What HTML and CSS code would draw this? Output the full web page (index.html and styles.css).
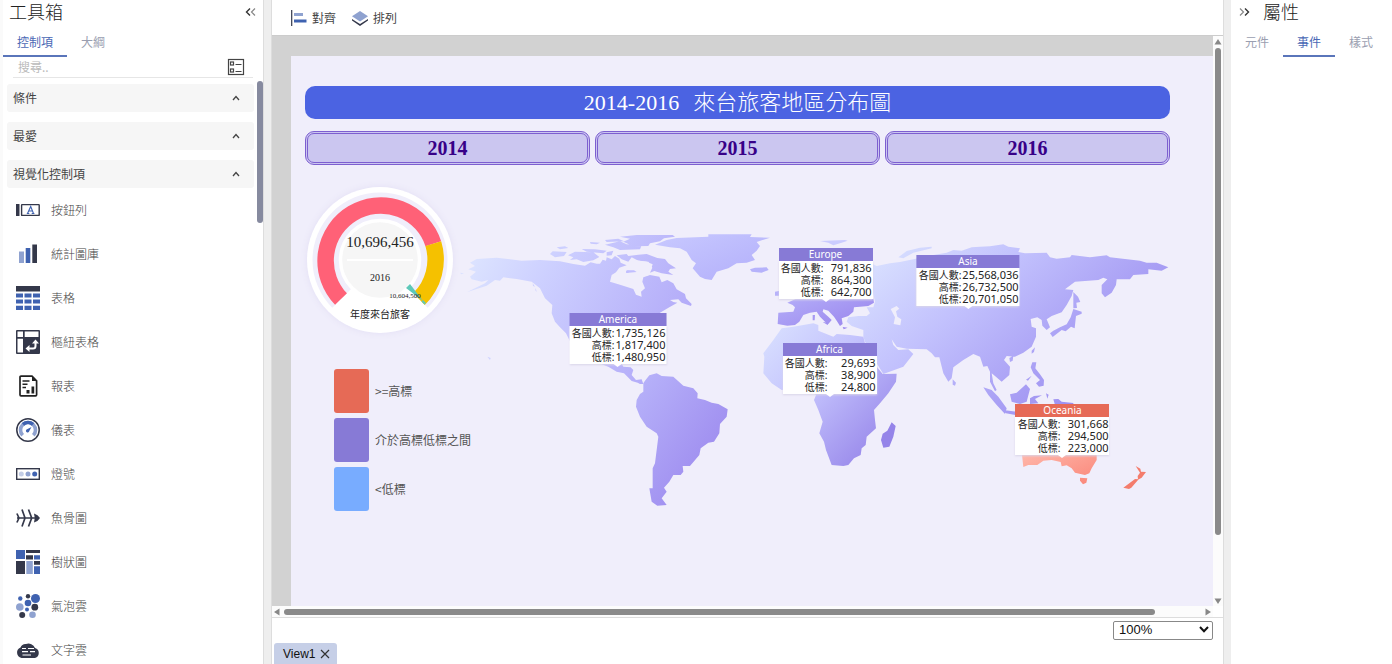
FILE: index.html
```html
<!DOCTYPE html>
<html lang="zh-Hant">
<head>
<meta charset="utf-8">
<title>2014-2016 來台旅客地區分布圖</title>
<link rel="stylesheet" href="styles.css">
</head>
<body>
<div class="app">
  <aside class="panel toolbox">
    <header class="panel-head">
      <h2>工具箱</h2>
      <button class="icon-btn" aria-label="收合"><svg width="12" height="10" viewBox="0 0 12 10"><path d="M5 1.500 1.500 5 5 8.500" fill="none" stroke="#333" stroke-width="1.400"/><path d="M10 1.500 6.500 5 10 8.500" fill="none" stroke="#888" stroke-width="1.200"/></svg></button>
    </header>
    <nav class="tabs"><button class="tab active">控制項</button><button class="tab">大綱</button></nav>
    <div class="search">
      <input type="text" aria-label="搜尋" placeholder="搜尋..">
      <button class="icon-btn" aria-label="檢視方式"><svg width="18" height="18" viewBox="0 0 18 18" fill="none" stroke="#444" stroke-width="1.200"><rect x="1.500" y="1.500" width="15" height="15"/><rect x="3.500" y="4" width="3" height="3"/><rect x="3.500" y="11" width="3" height="3"/><path d="M8.500 6.500h6M8.500 13.500h6"/></svg></button>
    </div>
    <div class="scroll-row">
      <div class="tool-list">
        <button class="section">條件<svg width="8" height="6" viewBox="0 0 8 6"><path d="M1 5 4 1.500 7 5"/></svg></button>
        <button class="section">最愛<svg width="8" height="6" viewBox="0 0 8 6"><path d="M1 5 4 1.500 7 5"/></svg></button>
        <button class="section">視覺化控制項<svg width="8" height="6" viewBox="0 0 8 6"><path d="M1 5 4 1.500 7 5"/></svg></button>
        <ul class="items">
          <li><svg viewBox="0 0 24 24"><path d="M0 6h3.500v12H0z" fill="#34384a"/><rect x="5.600" y="6.600" width="17.600" height="10.800" rx=".5" fill="#fff" stroke="#34384a" stroke-width="1.400"/><path d="M11.500 15.500 14.700 8.500 17.500 15.500M12.700 13h4M10.800 15.500h2.500M15.700 15.500h2.700" fill="none" stroke="#3f62b0" stroke-width="1.100"/></svg>按鈕列</li>
          <li><svg viewBox="0 0 24 24"><path d="M3 9.500h5V21H3z" fill="#8fa2d0"/><path d="M9.700 6h4.600v15H9.700z" fill="#3f62b0"/><path d="M16.300 2.500H21V21h-4.700z" fill="#34384a"/></svg>統計圖庫</li>
          <li><svg viewBox="0 0 24 24"><path d="M0 0h24v5.500H0z" fill="#34384a"/><path d="M0 7.500h7v4H0zM8.500 7.500h7v4h-7zM17 7.500h7v4h-7zM0 13.500h7v4H0zM8.500 13.500h7v4h-7zM17 13.500h7v4h-7zM0 19.800h7V24H0zM8.500 19.800h7V24h-7zM17 19.800h7V24h-7z" fill="#3f62b0"/></svg>表格</li>
          <li><svg viewBox="0 0 24 24"><rect width="24" height="24" rx="1" fill="#34384a"/><path d="M1.500 1.500H7V7H1.500zM8.700 1.500h13.800V7H8.700zM1.500 8.700H7v13.800H1.500z" fill="#fff"/><path d="M12 18.500h5q2.500 0 2.500-2.500v-4" fill="none" stroke="#fff" stroke-width="2"/><path d="m9.500 18.500 4-3.500v7zM19.500 9.500l-3.500 4h7z" fill="#fff"/></svg>樞紐表格</li>
          <li><svg viewBox="0 0 24 24"><path d="M5 2.200h11l4.600 4.600v14q0 1-1 1H5q-1 0-1-1V3.200q0-1 1-1z" fill="#fff" stroke="#222" stroke-width="1.700"/><path d="M16 2v5h5z" fill="#222"/><path d="M6.500 7h7M6.500 10.300h5M6.500 13.500h3.500" stroke="#222" stroke-width="1.400"/><path d="M10.500 16h3v3.500h-3zM15.500 12.500h2.700v7h-2.700z" fill="#222"/></svg>報表</li>
          <li><svg viewBox="0 0 24 24"><circle cx="12" cy="12" r="11.200" fill="#fff" stroke="#34384a" stroke-width="1.500"/><path d="M6.700 17.300A7.500 7.500 0 1 1 17.300 17.300" fill="none" stroke="#8fa2d0" stroke-width="3.600"/><path d="M7 6.400A7.500 7.500 0 0 1 17 6.400" fill="none" stroke="#3f62b0" stroke-width="3.600"/><path d="m15.500 9-5 2.500a1.700 1.700 0 1 0 2.800 1.500z" fill="#3f62b0"/></svg>儀表</li>
          <li><svg viewBox="0 0 24 24"><rect x=".7" y="6.700" width="22.600" height="10.600" fill="#fff" stroke="#34384a" stroke-width="1.400"/><circle cx="5.300" cy="12" r="2.500" fill="#c3cde6"/><circle cx="12" cy="12" r="2.500" fill="#8fa2d0"/><circle cx="18.700" cy="12" r="2.500" fill="#3f62b0"/></svg>燈號</li>
          <li><svg viewBox="0 0 24 24" fill="none" stroke="#34384a" stroke-width="1.700"><path d="M1 12h18M.9 7.500 3 12 .9 16.500M6 3.500 9 12 6 20.500M12.500 3.500l3.200 8.500-3.200 8.500"/><path d="M18 7.500q4 1 6 4.500-2 3.500-6 4.500 1.500-4.500 0-9z" fill="#34384a" stroke="none"/></svg>魚骨圖</li>
          <li><svg viewBox="0 0 24 24"><path d="M0 0h9v9H0zM18 5.300h6V9.500h-6zM18 16.300h6V24h-6z" fill="#3f62b0"/><path d="M10 0h14v3H10zM10 5.300h7V9.500h-7zM0 11h9v13H0zM18 11h6v3.700h-6z" fill="#34384a"/><path d="M10.300 11h6.500v13h-6.500z" fill="#8fa2d0"/></svg>樹狀圖</li>
          <li><svg viewBox="0 0 24 24"><g fill="#3f62b0"><circle cx="4.300" cy="4.500" r="2.200"/><circle cx="19.500" cy="4.500" r="4.500"/><circle cx="12" cy="9" r="3.300"/><circle cx="11" cy="15.500" r="2"/></g><g fill="#34384a"><circle cx="12" cy="2.300" r="2.200"/><circle cx="18.800" cy="13.200" r="3.400"/><circle cx="6.200" cy="21" r="3"/></g><g fill="#8fa2d0"><circle cx="3.800" cy="13" r="3.800"/><circle cx="16.500" cy="20.700" r="3.300"/></g></svg>氣泡雲</li>
          <li><svg viewBox="0 0 24 24"><path d="M5.500 20a5.500 5.500 0 0 1-1-10.500A5.500 5.500 0 0 1 10 6a7 7 0 0 1 9 4 5.200 5.200 0 0 1 0 10z" fill="#34384a"/><path d="M6 10.500h4M12 10.500h6M6 13.700h6M14 13.700h5M6.500 17h8.500" stroke="#fff" stroke-width="1.200"/></svg>文字雲</li>
        </ul>
      </div>
      <div class="side-thumb"></div>
    </div>
  </aside>

  <main class="work">
    <div class="toolbar">
      <button class="tool"><svg width="16" height="16" viewBox="0 0 16 16"><path d="M.7 0v16" stroke="#34384a" stroke-width="1.200"/><path d="M3 3h9v3H3z" fill="#8fa2d0"/><path d="M3 9.500h12.500v3H3z" fill="#3f62b0"/></svg>對齊</button>
      <button class="tool"><svg width="16" height="16" viewBox="0 0 16 16"><path d="m0 9 8 5 8-5v1.500L8 16 0 10.500z" fill="#34384a"/><path d="m8 1 8 5.200-8 5.300-8-5.300z" fill="#8fa2d0"/></svg>排列</button>
    </div>
    <div class="viewport">
      <div class="stage">
        <section class="dashboard">
          <h1 class="banner"><span>2014-2016</span><span>來台旅客地區分布圖</span></h1>
          <div class="years"><button>2014</button><button>2015</button><button>2016</button></div>
          <div class="content">
            <div class="facts">
              <svg class="gauge" viewBox="0 0 150 150" role="img" aria-label="年度來台旅客">
                <circle class="halo" cx="75" cy="74" r="73"/>
                <path d="M27.300 121.700A67.500 67.500 0 1 1 122.700 121.700L75 74z" fill="#f0eefb"/>
                <path d="M36 113A55.200 55.200 0 1 1 128.300 57.700" fill="none" stroke="#ff6177" stroke-width="16.500"/>
                <path d="M128.300 57.700A55.200 55.200 0 0 1 114 113" fill="none" stroke="#f5c100" stroke-width="16.500"/>
                <circle cx="75" cy="74" r="39.500" fill="#f6f6f6" stroke="#fff" stroke-width="3.500"/>
                <path d="M42 74h66" stroke="#fff" stroke-width="2"/>
                <path d="m105 98-4 4 17 13zM118 114l3 3-1.500 1.500-3-3z" fill="#5ec8b8"/>
                <text x="75" y="61" font-size="15">10,696,456</text>
                <text x="75" y="95" font-size="10">2016</text>
                <text x="100" y="112" font-size="7">10,604,500</text>
                <text class="caption" x="75" y="132" font-size="10">年度來台旅客</text>
              </svg>
              <ul class="legend">
                <li><i class="swatch high"></i>&gt;=高標</li>
                <li><i class="swatch mid"></i>介於高標低標之間</li>
                <li><i class="swatch low"></i>&lt;低標</li>
              </ul>
            </div>
            <div class="map">
              <svg class="world" viewBox="470 235 700 275" aria-hidden="true">
                <defs>
                  <linearGradient id="north" gradientUnits="userSpaceOnUse" x1="60" y1="100" x2="640" y2="430"><stop offset="0" stop-color="#dbe2ff"/><stop offset=".3" stop-color="#cdd0ff"/><stop offset="1" stop-color="#b1a8f8"/></linearGradient>
                  <linearGradient id="south" x1="0" y1="0" x2="1" y2="1"><stop offset="0" stop-color="#b8b4fa"/><stop offset="1" stop-color="#9781ec"/></linearGradient>
                  <linearGradient id="africa" x1="0" y1="0" x2="1" y2="1"><stop offset="0" stop-color="#dae2ff"/><stop offset=".4" stop-color="#c4c3fd"/><stop offset="1" stop-color="#8e7ae6"/></linearGradient>
                  <linearGradient id="green" x1="0" y1="0" x2="1" y2="1"><stop offset="0" stop-color="#c8c9ff"/><stop offset="1" stop-color="#b2aefa"/></linearGradient>
                  <linearGradient id="asia" gradientUnits="userSpaceOnUse" x1="-80" y1="60" x2="420" y2="620"><stop offset="0" stop-color="#dae2ff"/><stop offset=".4" stop-color="#c2c1fd"/><stop offset="1" stop-color="#9c8ef0"/></linearGradient>
                  <linearGradient id="oz" x1="0" y1="0" x2="1" y2="1"><stop offset="0" stop-color="#ffb9ac"/><stop offset="1" stop-color="#fa8578"/></linearGradient>
                </defs>
                <g transform="translate(460 220) scale(.33333)">
                  <path fill="url(#north)" d="M30 128 50 117 110 113 185 122 240 120 300 124 340 132 375 137 392 127 410 131 420 131 428 119 438 122 440 112 455 118 465 108 478 116 482 128 500 136 478 143 468 157 455 165 450 185 480 194 520 207 528 224 545 230 543 215 555 205 547 185 550 172 570 165 598 170 605 187 622 180 640 190 650 208 675 222 678 235 695 252 693 258 665 248 655 238 630 240 640 246 652 248 628 262 600 278 590 300 560 340 500 400 480 420 490 440 512 442 520 450 515 465 528 480 545 478 550 492 540 492 533 488 515 483 492 460 470 455 445 440 425 433 380 400 340 380 328 360 318 340 300 322 285 305 275 280 277 255 255 235 240 205 215 185 170 177 130 172 120 182 105 180 80 197 20 217 75 190 85 180 65 185 35 178 30 170 48 155 25 148 45 138ZM270 102 278 94 320 96 312 108 285 112ZM290 82 315 79 325 84 300 88ZM324 106 345 95 400 97 418 111 400 121 370 126 350 118 330 120 340 112ZM365 87 405 88 440 92 430 100 380 95ZM390 66 420 68 410 73 392 71ZM435 60 475 56 492 64 440 66ZM435 74 480 64 500 73 545 76 540 88 480 90 460 82ZM440 97 460 92 455 106 440 107ZM480 50 530 45 638 45 645 50 612 55 600 64 570 70 565 78 520 79 490 65 510 56ZM470 106 500 102 505 108 535 104 560 102 592 114 615 117 625 130 648 145 630 147 625 155 640 165 605 160 583 153 570 158 577 143 565 125 535 122 515 112 505 125 485 118ZM498 153 520 150 530 155 500 159ZM0 158l12 2-8 3ZM82 410l10 4-2 6ZM218 190l7 10-6-2ZM227 204l3 12-4-5Z"/>
                  <path fill="#f0eefb" d="M505 135 530 121 560 125 578 133 574 145 562 155 565 166 548 170 525 164 505 158 510 147Z"/>
                  <path fill="#c1beff" d="m500 151 22 0 8 5-32 3Z"/>
                  <path fill="url(#green)" d="M585 74 620 60 650 54 745 50 745 43 875 43 870 51 930 53 890 66 900 78 890 92 875 105 885 120 860 128 830 130 805 145 770 155 755 180 735 177 720 170 698 145 708 130 695 120 680 95 660 85 630 82ZM870 148 885 143 920 142 926 150 905 158 875 155Z"/>
                  <path fill="url(#south)" d="M555 482 568 466 590 460 605 468 640 470 670 497 700 505 713 520 712 535 735 540 755 548 775 552 803 568 800 590 780 612 778 640 762 665 745 668 722 685 718 705 690 738 668 738 670 755 662 765 640 765 628 785 612 803 620 815 605 835 620 855 592 857 575 845 568 805 578 805 578 745 585 730 595 650 590 640 560 620 540 590 528 560 530 540 540 522 550 515 550 490Z"/>
                </g>
                <g transform="translate(900 230) scale(.33333)">
                  <path fill="url(#asia)" d="M-90 98-70 108-30 100 0 96 40 88 100 75 140 68 160 60 185 62 215 52 240 50 270 49 310 43 325 50 360 55 355 66 375 70 440 68 450 82 470 86 510 82 515 75 570 82 620 76 630 82 720 92 740 98 770 98 805 112 785 122 745 118 745 132 700 135 690 148 650 148 648 165 635 188 615 202 605 190 605 165 622 148 610 143 595 150 525 155 495 178 520 180 515 198 500 225 485 247 455 258 440 268 450 292 440 300 427 287 425 270 412 262 392 267 395 290 408 295 408 320 395 350 370 368 345 380 320 378 312 390 330 410 328 435 305 455 285 438 275 430 280 460 290 480 285 484 270 455 270 425 262 408 250 410 240 380 220 372 190 390 160 412 155 445 145 455 130 430 118 382 105 382 95 370 80 358 20 356-10 350-25 328-20 345-5 360 25 358 40 372 10 410-50 432-70 400-90 360-105 335-110 320-110 300-145 288-160 275-155 262-125 258-100 258-90 250-100 232-80 232-75 215-85 170ZM-5 82 20 63 60 53 95 50 95 55 40 68 10 85ZM520 186 534 200 541 216 529 218 531 234 520 235ZM520 237 545 245 545 251 528 258 524 295 513 290 497 304 485 300 458 321 450 310 460 302 480 292 500 283 512 262ZM395 362 405 352 402 366 395 371ZM328 384 340 377 338 392 330 396ZM397 397 409 397 406 415 420 433 432 450 431 467 417 470 408 460 420 450 400 430 392 412ZM378 449 395 437 384 452ZM158 448 168 458 165 467 158 464ZM250 472 275 480 295 500 320 535 315 552 290 525 265 495ZM310 540 350 545 350 556 318 550ZM330 493 350 488 378 463 390 477 380 515 360 522 335 515ZM390 505 402 498 426 496 405 507 415 520 390 522ZM438 490l8 4-4 12ZM460 508 475 507 485 515 520 519 520 525 465 525Z"/>
                  <path fill="#cbccff" d="M-240 33-165 30-157 32-175 38-200 46-215 38Z"/>
                  <path fill="url(#oz)" d="M365 665H590V690L575 715 568 730 555 735 525 728 515 715 500 706 485 709 482 696 455 690 430 692 412 705 385 705 370 711ZM540 743 562 745 559 758 549 763 540 752Z"/>
                  <path fill="#f47c6c" d="m707 708 14 8 2 9 15 1-13 17-11 6-1-11 7-10Zm-2 39 11 1-22 25-7 4-17-4Z"/>
                </g>
                <g transform="translate(700 220) scale(.33333)">
                  <path fill="#f0eefb" d="m572 267 18-9 8 8-10 8 4 16 12 8-3 18-20-4 4-20Z"/>
                  <path fill="url(#africa)" d="M245 325 280 320 340 310 355 315 355 332 400 350 410 342 450 345 490 350 495 370 510 400 530 440 548 462 590 461 588 485 565 520 540 550 522 570 525 600 528 625 500 650 497 675 485 685 482 705 462 715 445 735 430 738 395 735 378 690 372 665 358 640 368 605 355 570 342 540 348 525 330 510 300 505 245 510 215 490 190 460 193 410 190 400 220 360Z"/>
                  <path fill="#9584e9" d="m575 607 12 11-7 32-12 30-18 3-7-23 5-19 14-9Z"/>
                  <path fill="url(#south)" d="M235 278 268 276 280 275 285 262 278 255 262 248 280 240 300 232 520 236 522 248 505 258 480 260 462 262 460 275 445 288 425 295 428 312 420 318 412 305 402 290 385 272 370 268 368 275 385 290 395 300 385 312 375 305 360 290 350 275 330 278 310 285 298 305 285 315 262 317 233 312ZM338 285l7 0-1 16-6 0ZM368 306l18 2-3 7ZM428 321l15 2-12 5ZM225 215l15-3v15h-15Z"/>
                </g>
              </svg>
              <table class="pin america"><caption>America</caption><tr><th>各國人數:</th><td>1,735,126</td></tr><tr><th>高標:</th><td>1,817,400</td></tr><tr><th>低標:</th><td>1,480,950</td></tr></table>
              <table class="pin europe"><caption>Europe</caption><tr><th>各國人數:</th><td>791,836</td></tr><tr><th>高標:</th><td>864,300</td></tr><tr><th>低標:</th><td>642,700</td></tr></table>
              <table class="pin africa"><caption>Africa</caption><tr><th>各國人數:</th><td>29,693</td></tr><tr><th>高標:</th><td>38,900</td></tr><tr><th>低標:</th><td>24,800</td></tr></table>
              <table class="pin asia"><caption>Asia</caption><tr><th>各國人數:</th><td>25,568,036</td></tr><tr><th>高標:</th><td>26,732,500</td></tr><tr><th>低標:</th><td>20,701,050</td></tr></table>
              <table class="pin oceania"><caption>Oceania</caption><tr><th>各國人數:</th><td>301,668</td></tr><tr><th>高標:</th><td>294,500</td></tr><tr><th>低標:</th><td>223,000</td></tr></table>
            </div>
          </div>
        </section>
      </div>
      <div class="vbar"><svg width="8" height="6" viewBox="0 0 8 6"><path d="M4 0 7.500 5.500H.5z"/></svg><div class="track"><div class="thumb"></div></div><svg width="8" height="6" viewBox="0 0 8 6"><path d="M4 6 .5.500h7z"/></svg></div>
      <div class="hbar"><svg width="6" height="8" viewBox="0 0 6 8"><path d="M0 4 5.500.5v7z"/></svg><div class="track"><div class="thumb"></div></div><svg width="6" height="8" viewBox="0 0 6 8"><path d="M6 4 .5.500v7z"/></svg></div>
    </div>
    <footer class="foot">
      <div class="view-tab"><button class="view-name">View1</button><button class="icon-btn" aria-label="關閉"><svg width="10" height="10" viewBox="0 0 10 10"><path d="m1 1 8 8M9 1 1 9" stroke="#333" stroke-width="1.200"/></svg></button></div>
      <div class="zoom"><select aria-label="縮放"><option>100%</option></select><svg width="10" height="7" viewBox="0 0 10 7"><path d="m1 1 4 4.200L9 1" fill="none" stroke="#111" stroke-width="2"/></svg></div>
    </footer>
  </main>

  <aside class="panel props">
    <header class="panel-head">
      <button class="icon-btn" aria-label="收合"><svg width="12" height="10" viewBox="0 0 12 10"><path d="M1 1.500 4.500 5 1 8.500" fill="none" stroke="#888" stroke-width="1.200"/><path d="M6 1.500 9.500 5 6 8.500" fill="none" stroke="#333" stroke-width="1.400"/></svg></button>
      <h2>屬性</h2>
    </header>
    <nav class="tabs"><button class="tab">元件</button><button class="tab active">事件</button><button class="tab">樣式</button></nav>
  </aside>
</div>
</body>
</html>
```
FILE: styles.css
```css
* { box-sizing: border-box; }
body { margin: 0; background: #fff; color: #444; font: 12px/18px "Noto Sans CJK TC", "Noto Sans", sans-serif; }
button { border: 0; background: none; padding: 0; margin: 0; font: inherit; color: inherit; cursor: pointer; }
ul { list-style: none; margin: 0; padding: 0; }
svg { display: block; flex: none; }
h1, h2 { margin: 0; font-weight: 400; }

.app { display: grid; grid-template-columns: 264px minmax(0, 1fr) 161px; column-gap: 7px; height: 100vh; background: #eee; overflow: hidden; }
.panel { display: flex; flex-direction: column; background: #fff; min-height: 0; overflow: hidden; }
.toolbox { border-left: 3px solid #fafafa; border-right: 1px solid #ddd; }
.panel-head { display: flex; align-items: center; height: 24px; flex: none; }
.panel-head h2 { font-size: 18px; line-height: 22px; padding-bottom: 2px; color: #222; font-weight: 300; }
.toolbox .panel-head { justify-content: space-between; padding: 0 6px; }
.props .panel-head { gap: 12px; padding: 0 8px; }

.tabs { display: flex; height: 33px; flex: none; }
.tab { padding: 4px 14px 0; border-bottom: 2px solid transparent; color: #9a9eb0; white-space: nowrap; }
.tab.active { color: #4a68b5; border-color: #5a75ba; }

.search { display: flex; align-items: center; height: 21px; flex: none; margin: 0 10px; padding-right: 8px; border-bottom: 1px solid #e6e6e6; }
.search input { flex: 1; min-width: 0; border: 0; outline: 0; padding: 0 5px; background: none; font: inherit; }
.search input::placeholder { color: #bbb; opacity: 1; }

.scroll-row { display: flex; flex: 1; min-height: 0; }
.tool-list { flex: 1; display: flex; flex-direction: column; padding: 6px 3px 0 4px; overflow: hidden; }
.section { display: flex; justify-content: space-between; align-items: center; flex: none; height: 28px; padding: 0 14px 0 6px; border-radius: 3px; background: #f6f6f6; }
.section + .section { margin-top: 10px; }
.section path { fill: none; stroke: #444; stroke-width: 1.300; }
.items li { display: flex; align-items: center; gap: 11px; height: 44px; padding-left: 9px; font-weight: 300; }
.items svg { width: 24px; height: 24px; }
.side-thumb { width: 6px; height: 142px; margin-top: 3px; border-radius: 3px; background: #868a9f; }

.work { display: flex; flex-direction: column; min-width: 0; min-height: 0; background: #fff; border: solid #ddd; border-width: 0 1px; }
.toolbar { display: flex; align-items: center; gap: 16px; height: 36px; flex: none; padding: 0 19px; border-bottom: 1px solid #ccc; }
.tool { display: flex; align-items: center; gap: 5px; }

.viewport { flex: 1; min-height: 0; display: grid; grid-template: minmax(0, 1fr) 11px / minmax(0, 1fr) 10px; border-bottom: 1px solid #ddd; }
.stage { background: #d2d2d2; padding: 20px 0 0 19px; overflow: hidden; }
.dashboard { min-height: 100%; padding: 30px 43px 0 14px; background: #f0eefb; }
.banner { display: flex; justify-content: center; align-items: center; gap: 14px; height: 33px; border-radius: 10px; background: #4b63e2; color: #fff; font-family: "Liberation Serif", "Noto Sans CJK TC", serif; font-size: 22px; font-weight: 300; }
.years { display: grid; grid-template-columns: repeat(3, 1fr); gap: 5px; margin-top: 12px; }
.years button { height: 34px; border: 3px double #7d5fd0; border-radius: 9px; background: #cbc6f0; color: #370088; font: bold 20px/24px "Liberation Serif", serif; }

.content { display: grid; grid-template-columns: 165px minmax(0, 1fr); align-items: start; }
.facts { padding-top: 21px; }
.gauge { width: 150px; height: 150px; overflow: visible; }
.gauge .halo { fill: #fff; filter: drop-shadow(0 0 3px #e2def4); }
.gauge text { text-anchor: middle; fill: #222; font-family: "Liberation Serif", serif; }
.gauge .caption { font-family: "Noto Sans CJK TC", sans-serif; }
.legend { display: grid; gap: 5px; margin: 33px 0 0 29px; }
.legend li { display: flex; align-items: center; gap: 6px; color: #555; white-space: nowrap; }
.swatch { flex: none; width: 35px; height: 44px; border-radius: 3px; }
.high { background: #e66a56; }
.mid { background: #877ad6; }
.low { background: #78acff; }

.map { position: relative; margin-top: 70px; }
.world { width: 100%; height: auto; overflow: visible; }
.pin { position: absolute; transform: translate(-50%, -100%); min-width: 94px; border-spacing: 0; padding: 1px 1px 1px 2px; background: #fff; color: #222; font: 11px/12px "Noto Sans", "Noto Sans CJK TC", sans-serif; box-shadow: 0 1px 2px #d9d5e8; white-space: nowrap; }
.pin caption { background: #877ad6; color: #fff; font-size: 10px; line-height: 13px; }
.pin th { width: 44px; padding: 0 1px 0 0; font-weight: 400; font-size: 10px; line-height: 12px; text-align: right; }
.pin td { padding: 0; text-align: right; }
.pin::after { content: ""; position: absolute; left: calc(50% - 4px); top: 100%; border: 4px solid transparent; border-top: 3px solid #fff; border-bottom: 0; }
.america { left: 21.14%; top: 46.9%; }
.europe { left: 50.79%; top: 23.3%; }
.africa { left: 51.36%; top: 57.8%; }
.asia { left: 71.14%; top: 25.8%; }
.oceania { left: 84.64%; top: 80%; }
.oceania caption { background: #e66a56; }

.vbar, .hbar { display: flex; align-items: center; background: #fcfcfc; }
.vbar { flex-direction: column; padding: 3px 0 2px; gap: 3px; }
.hbar { padding: 0 2px; gap: 4px; }
.vbar path, .hbar path { fill: #888; }
.track { flex: 1; }
.thumb { border-radius: 3px; background: #8a8a8a; }
.vbar .thumb { width: 6px; height: 89%; }
.hbar .thumb { height: 6px; width: 95%; }

.foot { display: flex; justify-content: space-between; align-items: flex-start; height: 46px; flex: none; padding: 2px 10px 0 2px; }
.view-tab { align-self: flex-end; display: flex; align-items: center; gap: 5px; height: 21px; padding: 0 7px 0 9px; border-radius: 3px 3px 0 0; background: #c6cfe7; color: #111; }
.view-name { font-family: "Liberation Sans", sans-serif; }
.zoom { position: relative; }
.zoom select { appearance: none; width: 100px; height: 19px; padding: 0 5px; border: 1px solid #888; border-radius: 2px; background: #fff; color: #111; font: 13px/16px "Liberation Sans", sans-serif; }
.zoom svg { position: absolute; right: 4px; top: 6px; pointer-events: none; }
```
